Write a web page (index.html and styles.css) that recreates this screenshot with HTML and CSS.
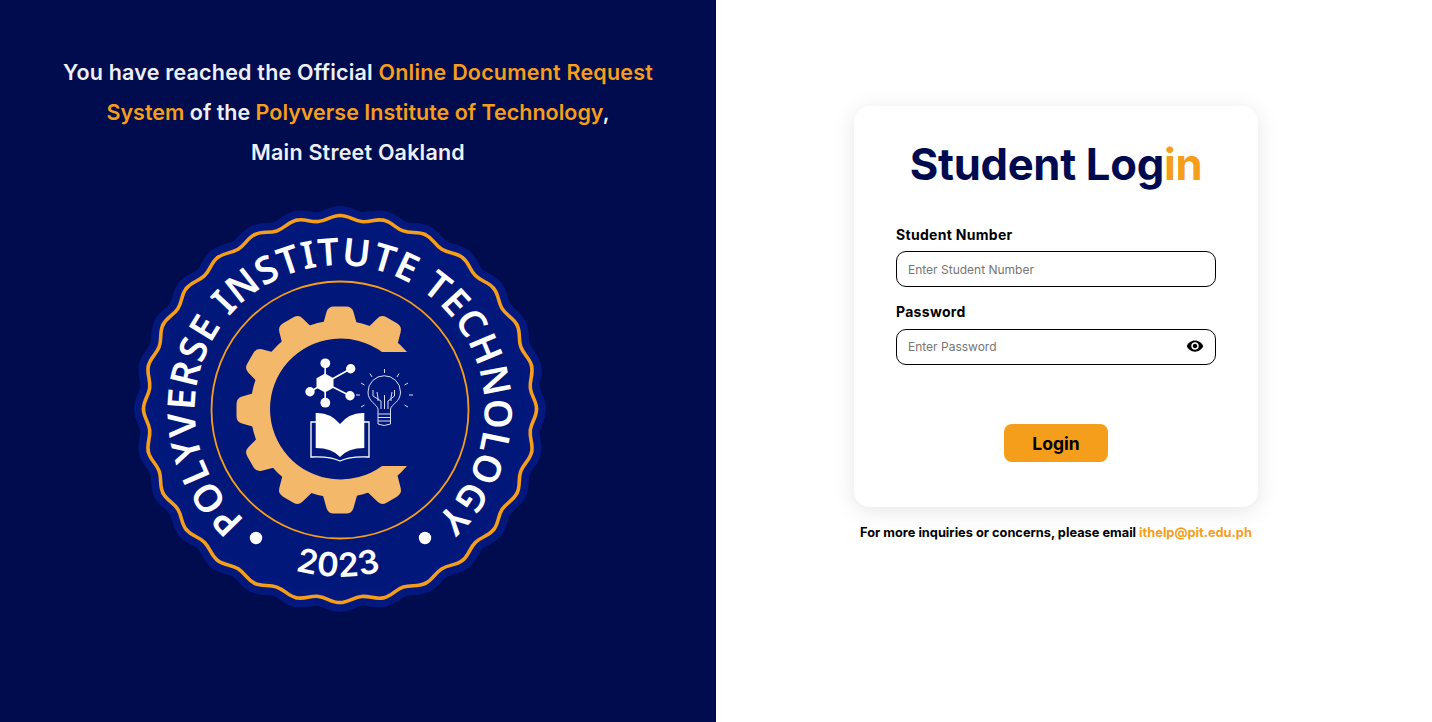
FILE: index.html
```html
<!DOCTYPE html>
<html lang="en">
<head>
<meta charset="utf-8">
<title>Student Login</title>
<link rel="stylesheet" href="styles.css">
</head>
<body>
<main class="page">
  <section class="intro">
    <p class="intro-text">You have reached the Official <span class="accent">Online Document Request</span><br><span class="intro-tight"><span class="accent">System</span> of the <span class="accent">Polyverse Institute of Technology</span>,</span><br>Main Street Oakland</p>
    <svg class="seal" viewBox="-210 -210 420 420" aria-label="Polyverse Institute Technology seal">
      <defs>
        <path id="wave" d="M196.500 0C196.500 9 191.500 12.600 190.300 21.400C189.300 30 193.500 35.600 191.600 43.700"/>
        <g id="w4">
          <use href="#wave"/>
          <use href="#wave" transform="rotate(12.857)"/>
          <use href="#wave" transform="rotate(25.714)"/>
          <use href="#wave" transform="rotate(38.571)"/>
        </g>
        <g id="w28">
          <use href="#w4"/>
          <use href="#w4" transform="rotate(51.429)"/>
          <use href="#w4" transform="rotate(102.857)"/>
          <use href="#w4" transform="rotate(154.286)"/>
          <use href="#w4" transform="rotate(205.714)"/>
          <use href="#w4" transform="rotate(257.143)"/>
          <use href="#w4" transform="rotate(308.571)"/>
        </g>
        <path id="tooth" d="M-18-82L-13.500-98Q-12-103.500-6-103.500L6-103.500Q12-103.500 13.500-98L18-82Z"/>
        <path id="arc-top" d="M-95 110A145 145 0 1 1 70 127"/>
        <path id="arc-bottom" d="M-80 146A166 166 0 0 0 80 146"/>
      </defs>
      <g transform="translate(0 -1) scale(1 .985)">
        <circle class="seal-disc" r="194"/>
        <use href="#w28" class="seal-rim"/>
        <use href="#w28" class="seal-wave"/>
      </g>
      <circle class="seal-ring" r="128.500"/>
      <g class="gear">
        <path d="M67-58A88.600 88.600 0 1 0 67 56L42 56A70.500 70.500 0 1 1 42-58Z"/>
        <use href="#tooth"/>
        <use href="#tooth" transform="rotate(30)"/>
        <use href="#tooth" transform="rotate(-30)"/>
        <use href="#tooth" transform="rotate(-60)"/>
        <use href="#tooth" transform="rotate(-90)"/>
        <use href="#tooth" transform="rotate(-120)"/>
        <use href="#tooth" transform="rotate(-150)"/>
        <use href="#tooth" transform="rotate(180)"/>
        <use href="#tooth" transform="rotate(150)"/>
      </g>
      <g class="mol-lines">
        <path d="M-15-27L-14.700-46.700M-15-27L10.700-41.300M-15-27L-30-18.300M-15-27L10-14.300M-15-27L-14.700-7.300"/>
      </g>
      <g class="mol-nodes">
        <path d="M-15-36.500L-6.500-31.700L-6.500-22.300L-15-17.500L-23.500-22.300L-23.500-31.700Z"/>
        <circle cx="-14.700" cy="-46.700" r="4.900"/>
        <circle cx="10.700" cy="-41.300" r="4.700"/>
        <circle cx="-30" cy="-18.300" r="4.700"/>
        <circle cx="10" cy="-14.300" r="4.700"/>
        <circle cx="-14.700" cy="-7.300" r="4.900"/>
      </g>
      <path class="book-pages" d="M-24.300 3Q-10 2 0 14Q10 2 24.300 3L24.300 38Q8 38 0 47Q-8 38-24.300 38Z"/>
      <path class="book-cover" d="M-24 12L-29 12L-29 47Q-10 46 0 51Q10 46 29 47L29 12L24 12"/>
      <g class="bulb">
        <path d="M38 4L38-1C37-6 28-8 28-18A16 16 0 1 1 60.500-18C60.500-8 51.500-6 50.500-1L50.500 4Z"/>
        <path d="M38 4L38 14Q44 17 50.500 14L50.500 4M38 7.500L50.500 7.500M38 11L50.500 11"/>
        <path d="M41-1L41-9L33-14L33-20M44.500-1L44.500-15M48-1L48-9L54.500-14L54.500-20M38-9L38-12L37-18M51-9L51-12L52-18"/>
        <path d="M44.500-37L44.500-41M32-33L30-36.500M57-33L59-36.500M24.500-25L21-27M64.500-25L68-27M20-15L16-15M69-15L73-15M24.500-5L21-3M64.500-5L68-3"/>
      </g>
      <text class="seal-title"><textPath href="#arc-top">POLYVERSE INSTITUTE TECHNOLOGY</textPath></text>
      <text class="seal-year"><textPath href="#arc-bottom" startOffset="49%">2023</textPath></text>
      <circle class="seal-dot" cx="-84" cy="128" r="6.200"/>
      <circle class="seal-dot" cx="85" cy="128" r="6.200"/>
    </svg>
  </section>

  <section class="access">
    <form class="card">
      <h1 class="card-title">Student Log<span class="accent-title">in</span></h1>
      <label class="field-label" for="student">Student Number</label>
      <input class="field-input" id="student" type="text" placeholder="Enter Student Number">
      <label class="field-label field-label-second" for="password">Password</label>
      <div class="password-wrap">
        <input class="field-input field-input-pw" id="password" type="password" placeholder="Enter Password">
        <svg class="eye" viewBox="0 0 24 24" aria-hidden="true"><path d="M12 4.500C7 4.500 2.730 7.610 1 12c1.730 4.390 6 7.500 11 7.500s9.270-3.110 11-7.500c-1.730-4.390-6-7.500-11-7.500zM12 17c-2.760 0-5-2.240-5-5s2.240-5 5-5 5 2.240 5 5-2.240 5-5 5zm0-8c-1.660 0-3 1.340-3 3s1.340 3 3 3 3-1.340 3-3-1.340-3-3-3z"/></svg>
      </div>
      <button class="submit" type="button">Login</button>
    </form>
    <p class="contact">For more inquiries or concerns, please email <span class="contact-mail">ithelp@pit.edu.ph</span></p>
  </section>
</main>
</body>
</html>
```

FILE: styles.css
```css
* { box-sizing: border-box; }
html, body { margin: 0; height: 100%; }
body { font-family: Inter, "Liberation Sans", sans-serif; background: #fff; color: #000; overflow: hidden; }
.page { display: flex; height: 722px; }

.intro { width: 716px; background: #010c4e; padding-top: 52px; display: flex; flex-direction: column; }
.intro-text { margin: 0; text-align: center; font-size: 21.500px; line-height: 40px; font-weight: 600; letter-spacing: .2px; color: #eef0f8; white-space: nowrap; }
.intro-tight { letter-spacing: 0; }
.accent { color: #f59e1b; }
.seal { display: block; width: 420px; height: 420px; margin: 28px 0 0 130px; overflow: visible; }
.seal-disc { fill: #02177a; }
#wave { fill: none; stroke-linecap: round; stroke-linejoin: round; }
.seal-rim { stroke: #02187d; stroke-width: 19px; }
.seal-wave { stroke: #f59e1b; stroke-width: 3.600px; }
.seal-ring { fill: none; stroke: #f59e1b; stroke-width: 1.800px; }
.gear { fill: #f3b86a; }
.mol-lines { stroke: #fff; stroke-width: 1.600px; fill: none; }
.mol-nodes { fill: #fff; }
.book-pages { fill: #fff; }
.book-cover { fill: none; stroke: #fff; stroke-width: 1.300px; }
.bulb { fill: none; stroke: #d9def2; stroke-width: 1px; }
.seal-title { font-family: "Noto Sans", sans-serif; font-weight: 600; font-size: 38px; letter-spacing: .85px; fill: #fff; }
.seal-year { font-family: Inter, sans-serif; font-weight: 600; font-size: 33px; letter-spacing: .8px; fill: #fff; text-anchor: middle; }
.seal-dot { fill: #fff; }

.access { width: 716px; padding: 106px 0 0 138px; }
.card { width: 404px; height: 401px; padding: 35px 42px 0; background: #fff; border-radius: 16px; box-shadow: 0 4px 22px rgba(0, 0, 0, .1); display: flex; flex-direction: column; }
.card-title { margin: 0 0 36px; text-align: center; font-size: 43.600px; line-height: 48px; font-weight: 700; color: #000b4f; letter-spacing: -.3px; white-space: nowrap; }
.accent-title { color: #f59e1b; }
.field-label { display: block; font-size: 14px; line-height: 20px; font-weight: 700; letter-spacing: .3px; margin-bottom: 6px; }
.field-label-second { margin-top: 15px; margin-bottom: 7px; }
.field-input { display: block; width: 320px; height: 36px; padding: 0 11px; border: 1px solid #000; border-radius: 10px; background: #fff; font: 400 12px Inter, sans-serif; color: #000; outline: none; }
.field-input-pw { padding-bottom: 2px; }
.field-input::placeholder { color: #757575; opacity: 1; }
.password-wrap { position: relative; }
.eye { position: absolute; right: 12px; top: 8px; width: 18px; height: 18px; fill: #000; }
.submit { align-self: center; width: 104px; height: 38px; margin-top: 59px; border: 0; border-radius: 8px; background: #f59e1b; color: #000; font: 700 17.500px Inter, sans-serif; }
.contact { width: 404px; margin: 17px 0 0; text-align: center; font-size: 12.800px; line-height: 18px; font-weight: 700; white-space: nowrap; }
.contact-mail { color: #f59e1b; }
```
